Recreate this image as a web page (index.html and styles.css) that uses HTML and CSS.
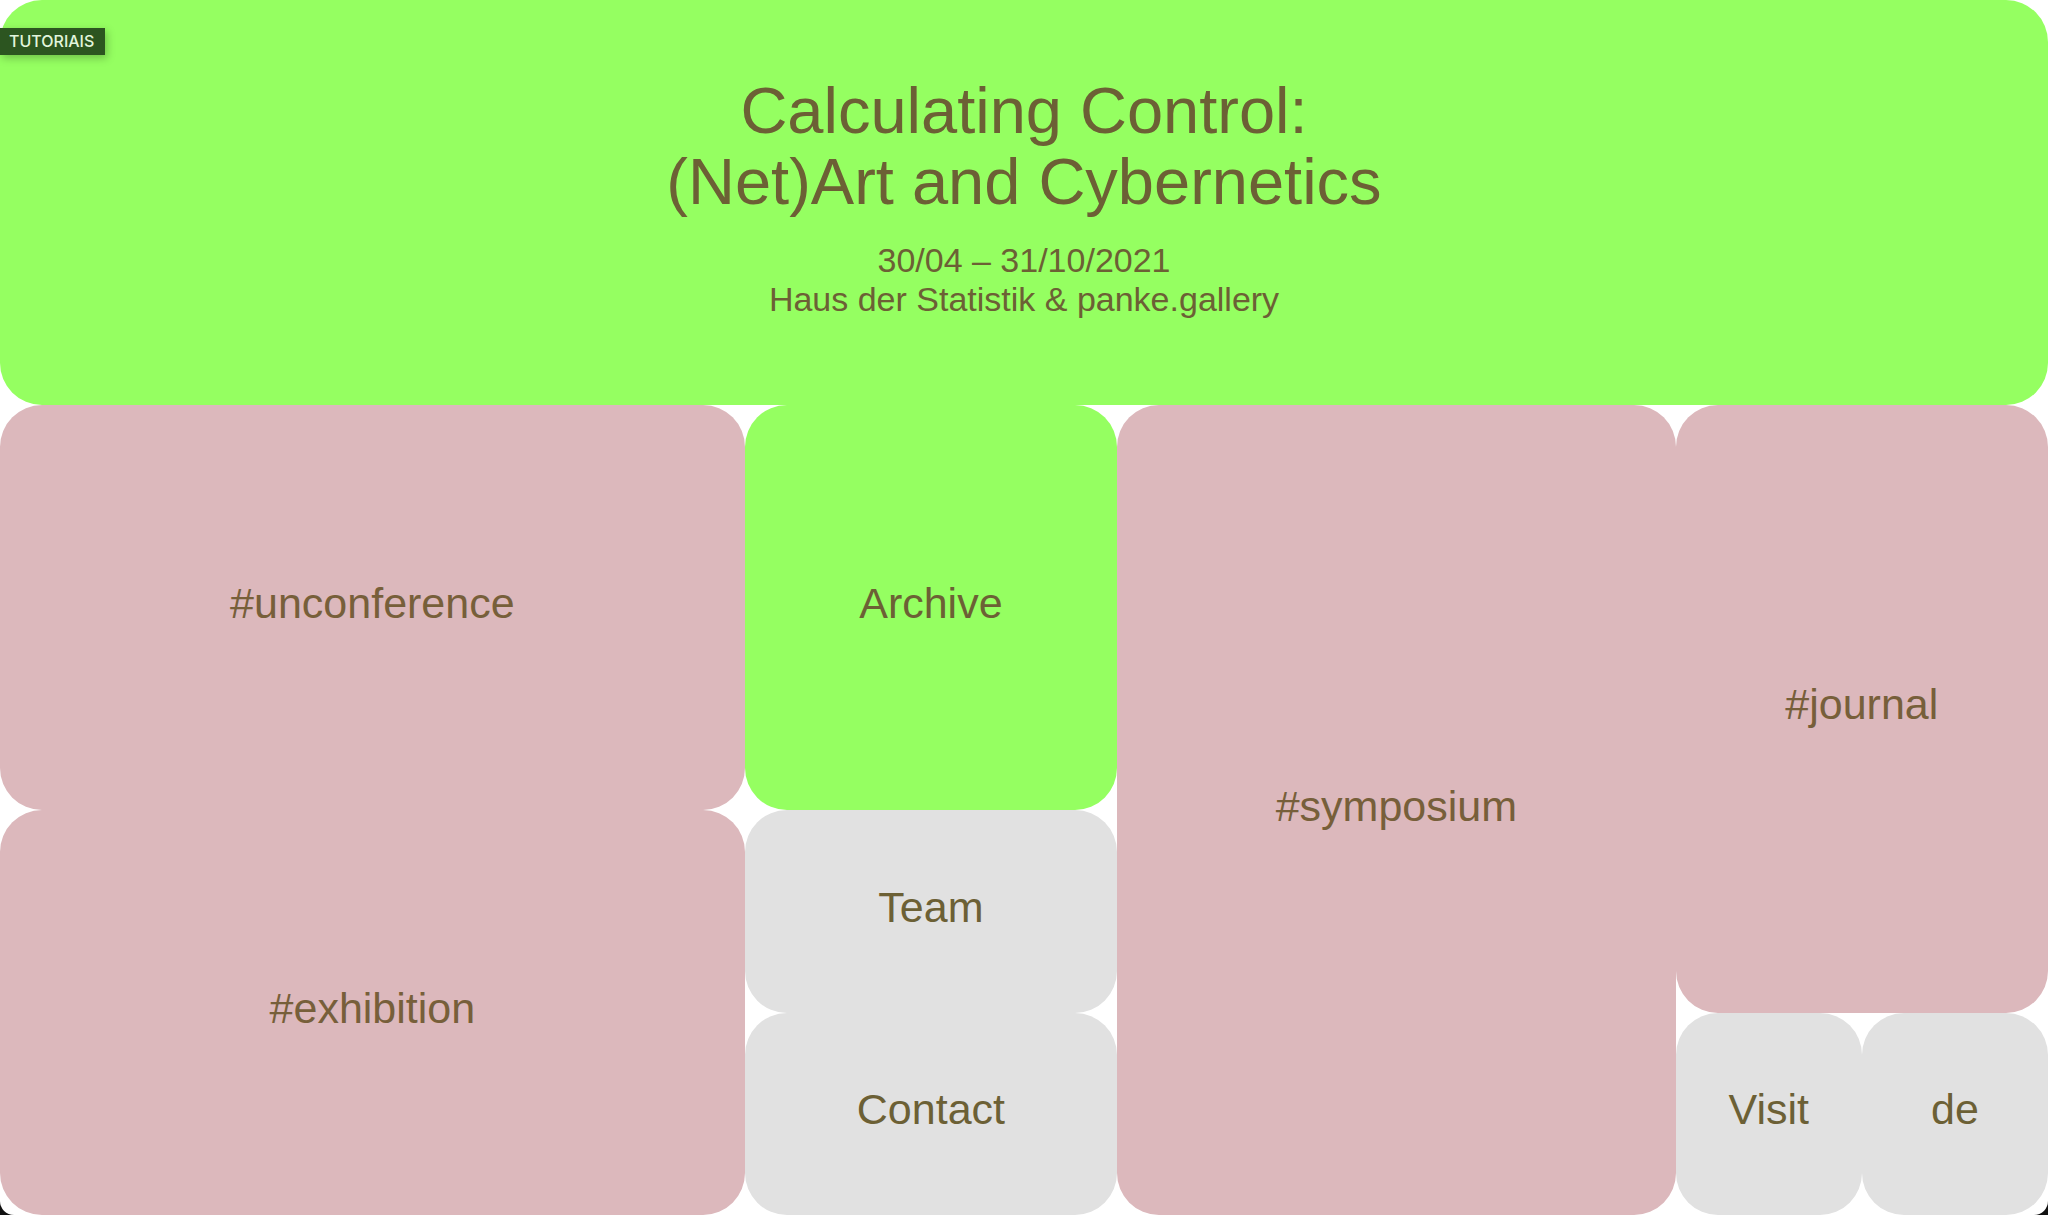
FILE: index.html
```html
<!DOCTYPE html>
<html lang="en">
<head>
  <meta charset="utf-8">
  <meta name="viewport" content="width=device-width, initial-scale=1">
  <title>Calculating Control: (Net)Art and Cybernetics</title>
  <link rel="stylesheet" href="styles.css">
</head>
<body>
  <div class="page">
    <header class="tile tile-header green">
      <h1 class="title">Calculating Control:<br>(Net)Art and Cybernetics</h1>
      <p class="details">30/04 – 31/10/2021<br>Haus der Statistik &amp; panke.gallery</p>
    </header>
    <nav class="tiles">
      <a class="tile tile-unconference pink" href="#unconference">#unconference</a>
      <a class="tile tile-exhibition pink" href="#exhibition">#exhibition</a>
      <a class="tile tile-archive green" href="#archive">Archive</a>
      <a class="tile tile-team gray" href="#team">Team</a>
      <a class="tile tile-contact gray" href="#contact">Contact</a>
      <a class="tile tile-symposium pink" href="#symposium">#symposium</a>
      <a class="tile tile-journal pink" href="#journal">#journal</a>
      <a class="tile tile-visit gray" href="#visit">Visit</a>
      <a class="tile tile-language gray" href="#de">de</a>
    </nav>
    <span class="badge">TUTORIAIS</span>
  </div>
</body>
</html>
```
FILE: styles.css
```css
* {
  box-sizing: border-box;
}

html {
  background: #111;
}

body {
  margin: 0;
  font-family: "Liberation Sans", Arial, sans-serif;
  color: #6c6035;
}

.page {
  position: relative;
  display: grid;
  grid-template-rows: 1fr 2fr;
  min-height: 100vh;
  background: #fff;
  border-radius: 0 0 14px 14px;
}

.tiles {
  display: grid;
  grid-template-columns: repeat(11, minmax(0, 1fr));
  grid-template-rows: repeat(4, minmax(0, 1fr));
  grid-template-areas:
    "unc unc unc unc arc arc sym sym sym jou jou"
    "unc unc unc unc arc arc sym sym sym jou jou"
    "exh exh exh exh tea tea sym sym sym jou jou"
    "exh exh exh exh con con sym sym sym vis lan";
}

.tile {
  display: flex;
  align-items: center;
  justify-content: center;
  padding-bottom: 8px;
  border-radius: 42px;
  color: inherit;
  font-size: 43px;
  text-decoration: none;
}

.tile-header {
  flex-direction: column;
  gap: 24px;
  padding-bottom: 12px;
  text-align: center;
}

.title {
  margin: 0;
  font-size: 65px;
  font-weight: 400;
  line-height: 71px;
}

.details {
  margin: 0;
  font-size: 34px;
  line-height: 39px;
}

.green {
  background: #95ff61;
}

.pink {
  background: #dcb8bc;
  color: #775f3a;
}

.gray {
  background: #e1e1e1;
}

.tile-unconference { grid-area: unc; }
.tile-exhibition { grid-area: exh; }
.tile-archive { grid-area: arc; }
.tile-team { grid-area: tea; }
.tile-contact { grid-area: con; }
.tile-symposium { grid-area: sym; }
.tile-journal { grid-area: jou; }
.tile-visit { grid-area: vis; }
.tile-language { grid-area: lan; }

.badge {
  position: absolute;
  top: 28px;
  left: 0;
  padding: 0 11px 0 9px;
  background: #2c5520;
  box-shadow: 2px 3px 8px rgba(0, 0, 0, 0.25);
  color: #e2f5dc;
  font-family: Inter, sans-serif;
  font-size: 16px;
  font-weight: 500;
  line-height: 27px;
}
```
